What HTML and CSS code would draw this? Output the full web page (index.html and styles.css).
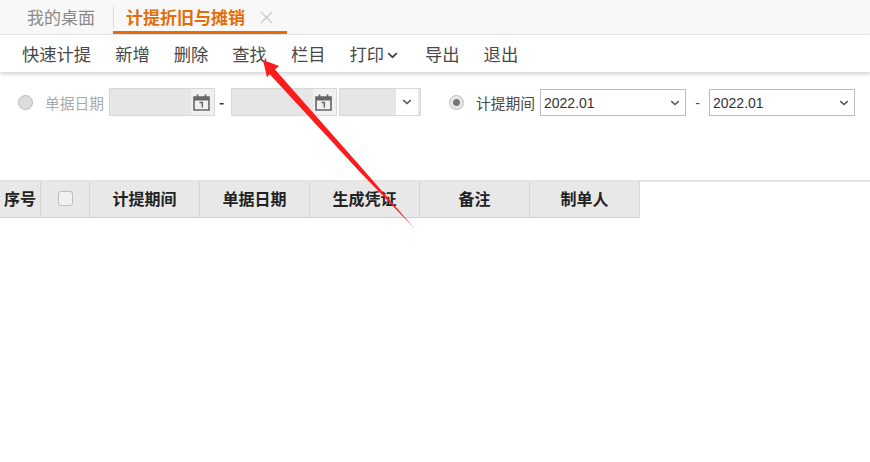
FILE: index.html
```html
<!DOCTYPE html>
<html lang="zh-CN">
<head>
    <meta charset="UTF-8">
    <title>计提折旧与摊销</title>
    <link rel="stylesheet" href="styles.css">
</head>
<body>
    <div class="tabs">
        <div class="tab">我的桌面</div>
        <div class="tab tab-active">
            <span>计提折旧与摊销</span>
            <svg class="tab-close" width="13" height="13" viewBox="0 0 13 13"><path d="M1 1L12 12M12 1L1 12" stroke="#c8c8c8" stroke-width="1.3" fill="none"/></svg>
        </div>
    </div>

    <div class="toolbar">
        <span>快速计提</span>
        <span>新增</span>
        <span>删除</span>
        <span>查找</span>
        <span>栏目</span>
        <span class="has-menu">打印<svg width="11" height="7" viewBox="0 0 11 7"><path d="M1.2 1.2L5.5 5.2L9.800 1.2" stroke="#444" stroke-width="1.8" fill="none"/></svg></span>
        <span>导出</span>
        <span>退出</span>
    </div>

    <div class="filter">
        <div class="filter-left">
            <span class="radio"></span>
            <span class="label label-off">单据日期</span>
            <div class="date">
                <span class="cal">
                    <svg width="17" height="17" viewBox="0 0 17 17"><path d="M1 3H16V16H1Z" fill="#f0f0f0" stroke="#666" stroke-width="1.6"/><path d="M1 3H16V6.500H1Z" fill="#666"/><path d="M4.500 0.500V3M12.500 0.500V3" stroke="#666" stroke-width="1.8"/><path d="M6.500 8.500H9.300V13.500" stroke="#666" stroke-width="1.5" fill="none"/></svg>
                </span>
            </div>
            <span class="date-dash">-</span>
            <div class="date">
                <span class="cal">
                    <svg width="17" height="17" viewBox="0 0 17 17"><path d="M1 3H16V16H1Z" fill="#f0f0f0" stroke="#666" stroke-width="1.6"/><path d="M1 3H16V6.500H1Z" fill="#666"/><path d="M4.500 0.500V3M12.500 0.500V3" stroke="#666" stroke-width="1.8"/><path d="M6.500 8.500H9.300V13.500" stroke="#666" stroke-width="1.5" fill="none"/></svg>
                </span>
            </div>
            <div class="date-type">
                <span class="date-type-btn">
                    <svg width="10" height="6" viewBox="0 0 13 8"><path d="M1.500 1.500L6.500 6L11.500 1.500" stroke="#555" stroke-width="2" fill="none"/></svg>
                </span>
            </div>
        </div>
        <div class="filter-right">
            <span class="radio radio-on"></span>
            <span class="label label-on">计提期间</span>
            <div class="select">
                <span>2022.01</span>
                <svg width="10" height="6" viewBox="0 0 13 8"><path d="M1.500 1.500L6.500 6L11.500 1.500" stroke="#555" stroke-width="2" fill="none"/></svg>
            </div>
            <span class="select-dash">-</span>
            <div class="select">
                <span>2022.01</span>
                <svg width="10" height="6" viewBox="0 0 13 8"><path d="M1.500 1.500L6.500 6L11.500 1.500" stroke="#555" stroke-width="2" fill="none"/></svg>
            </div>
        </div>
    </div>

    <div class="grid">
        <div class="grid-head">
            <div class="col col-no">序号</div>
            <div class="col col-check"><span class="checkbox"></span></div>
            <div class="col">计提期间</div>
            <div class="col">单据日期</div>
            <div class="col">生成凭证</div>
            <div class="col">备注</div>
            <div class="col">制单人</div>
        </div>
    </div>

    <svg class="arrow" width="870" height="462" viewBox="0 0 870 462">
        <polygon points="263,60 279,66 275,69.500 364.500,171 415,229 359,171 269.500,74 267,77.500" fill="#fb1d1d"/>
    </svg>
</body>
</html>
```

FILE: styles.css
```css
body {
    margin: 0;
    height: 462px;
    overflow: hidden;
    position: relative;
    background: #fff;
    font-family: "Noto Sans CJK SC", "Liberation Sans", sans-serif;
    color: #484848;
}

.tabs {
    display: flex;
    height: 34px;
    padding-left: 27px;
    background: #f8f8f8;
    border-bottom: 1px solid #e6e8f2;
}
.tab {
    width: 86px;
    font-size: 17px;
    line-height: 34px;
    color: #8a8a8a;
}
.tab-active {
    display: flex;
    align-items: center;
    gap: 15px;
    width: 161px;
    height: 29px;
    padding: 2px 0 0 13px;
    line-height: 29px;
    font-weight: bold;
    color: #e46c0a;
    border-bottom: 3px solid #e46c0a;
    background: linear-gradient(#ddd, #ddd) left 6px / 1px 22px no-repeat;
}
.tab-close {
    flex: none;
    margin-top: 2px;
}

.toolbar {
    display: flex;
    gap: 24px;
    height: 37px;
    padding-left: 22px;
    font-size: 17.300px;
    line-height: 37px;
    box-shadow: 0 2px 4px rgba(0, 0, 0, 0.18);
}
.has-menu svg {
    margin: 0 3px;
    vertical-align: 2px;
}

.filter {
    display: flex;
    justify-content: space-between;
    height: 28px;
    margin-top: 16px;
    padding: 0 15px 0 18px;
    font-size: 14px;
}
.filter-left,
.filter-right {
    display: flex;
    align-items: center;
}
.radio {
    box-sizing: border-box;
    width: 15px;
    height: 15px;
    border: 1px solid #bbb;
    border-radius: 50%;
    background: #ddd;
}
.radio-on {
    background: radial-gradient(circle, #777 0 3px, #e6e6e6 4px);
}
.label {
    font-size: 14.750px;
    white-space: nowrap;
}
.label-off {
    margin-left: 12px;
    color: #aaa;
}
.label-on {
    margin-left: 12px;
}

.date {
    display: flex;
    justify-content: flex-end;
    box-sizing: border-box;
    width: 106px;
    height: 28px;
    margin-left: 5px;
    background: #e6e6e6;
    border: 1px solid #d8d8d8;
}
.cal {
    display: flex;
    align-items: center;
    justify-content: center;
    box-sizing: border-box;
    width: 23px;
    padding-right: 3px;
    background: #f0f0f0;
}
.date-dash {
    width: 13px;
    margin-right: 3px;
    text-align: center;
    font-weight: bold;
    color: #333;
}
.date-dash + .date {
    margin-left: 0;
}
.date-type {
    display: flex;
    justify-content: flex-end;
    box-sizing: border-box;
    width: 82px;
    height: 28px;
    margin-left: 2px;
    padding-right: 2px;
    background: #e6e6e6;
    border: 1px solid #d8d8d8;
}
.date-type-btn {
    display: flex;
    align-items: center;
    justify-content: center;
    width: 22px;
    background: #fff;
}

.select {
    display: flex;
    align-items: center;
    justify-content: space-between;
    box-sizing: border-box;
    width: 146px;
    height: 27px;
    margin-left: 5px;
    padding: 1px 5px 0 3px;
    background: #fff;
    border: 1px solid #bdbdbd;
    font-family: "Liberation Sans", sans-serif;
    font-size: 14px;
    color: #333;
}
.select-dash {
    width: 23px;
    padding-top: 2px;
    text-align: center;
    font-family: "Liberation Sans", sans-serif;
}
.select-dash + .select {
    margin-left: 0;
}

.grid {
    margin-top: 64px;
    border-top: 2px solid #e4e4e4;
}
.grid-head {
    display: grid;
    grid-template-columns: 40px 49px repeat(5, 110px);
    width: 640px;
    height: 36px;
    box-sizing: border-box;
    background: #e8e8e8;
    border-bottom: 1px solid #d0d0d0;
    border-right: 1px solid #d6d6d6;
    font-size: 16px;
    font-weight: bold;
    color: #222;
}
.col {
    display: flex;
    align-items: center;
    justify-content: center;
    padding-bottom: 3px;
    border-left: 1px solid #d4d4d4;
}
.col-no {
    border-left: none;
}
.col-check {
    padding-bottom: 2px;
}
.checkbox {
    box-sizing: border-box;
    width: 15px;
    height: 15px;
    border: 1px solid #bdbdbd;
    border-radius: 3px;
    background: #f1f1f1;
}

.arrow {
    position: absolute;
    left: 0;
    top: 0;
    pointer-events: none;
}
```
